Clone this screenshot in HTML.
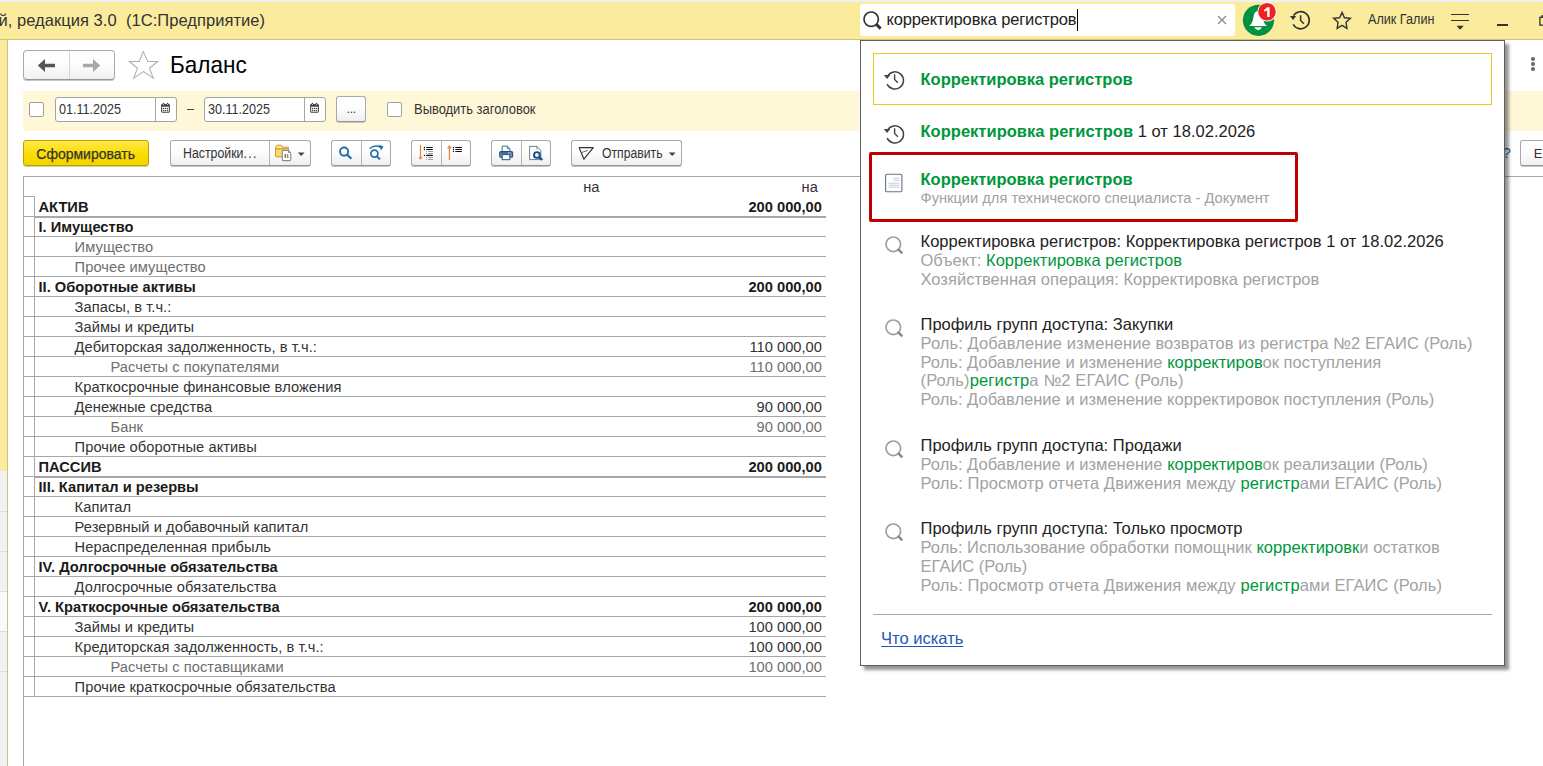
<!DOCTYPE html>
<html><head><meta charset="utf-8"><style>
html,body{margin:0;padding:0;width:1543px;height:766px;overflow:hidden;background:#fff;}
body{position:relative;font-family:"Liberation Sans", sans-serif;}
body>div,body>svg{position:absolute;}
.t{white-space:nowrap;line-height:1;}
</style></head><body>
<div style="left:0px;top:0px;width:1543px;height:2px;background:#F0F0F0"></div>
<div style="left:0px;top:2px;width:1543px;height:37px;background:#FBEB9D"></div>
<div style="left:0px;top:39px;width:1543px;height:1px;background:#D3C37A"></div>
<div style="left:0px;top:40px;width:7px;height:431px;background:#FBEB9D"></div>
<div style="left:0px;top:471px;width:7px;height:295px;background:#F2F2F2"></div>
<div style="left:0px;top:511px;width:7px;height:1px;background:#DCDCDC"></div>
<div style="left:0px;top:551px;width:7px;height:1px;background:#DCDCDC"></div>
<div style="left:0px;top:591px;width:7px;height:1px;background:#DCDCDC"></div>
<div style="left:0px;top:631px;width:7px;height:1px;background:#DCDCDC"></div>
<div style="left:0px;top:671px;width:7px;height:1px;background:#DCDCDC"></div>
<div style="left:0px;top:592px;width:7px;height:39px;background:#FAFAFA"></div>
<div style="left:7px;top:40px;width:1px;height:726px;background:#CFC07A"></div>
<div class="t" style="left:-1.6px;top:12.03px;font-size:16.5px;font-weight:400;color:#333;letter-spacing:0.05px;">й, редакция 3.0&nbsp; (1С:Предприятие)</div>
<div style="left:860px;top:4px;width:375px;height:32px;background:#fff;border-radius:3px"></div>
<svg style="left:860px;top:8px" width="26" height="26" viewBox="0 0 26 26"><circle cx="11.2" cy="11.2" r="7.2" fill="none" stroke="#333" stroke-width="1.7"/><line x1="16.3" y1="16.3" x2="20.6" y2="20.6" stroke="#333" stroke-width="3" stroke-linecap="butt"/></svg>
<div class="t" style="left:886.5px;top:11.03px;font-size:16.5px;font-weight:400;color:#222;letter-spacing:-0.15px;">корректировка регистров</div>
<div style="left:1077px;top:9px;width:1px;height:22px;background:#000"></div>
<svg style="left:1214px;top:12px" width="16" height="16" viewBox="0 0 16 16"><path d="M4 4 L12 12 M12 4 L4 12" stroke="#8a8a8a" stroke-width="1.3"/></svg>
<svg style="left:1240px;top:0px" width="42" height="40" viewBox="0 0 42 40"><circle cx="18.5" cy="20.3" r="15.6" fill="#009240"/><path d="M18 11.3 Q14.6 11.3 13.8 15.5 L12.6 21 Q11.6 24 9.2 25.9 L26.8 25.9 Q24.4 24 23.4 21 L22.2 15.5 Q21.4 11.3 18 11.3 Z" fill="#fff"/><path d="M14.3 27.3 L22 27.3 Q20.5 30.2 18.2 30.2 Q15.8 30.2 14.3 27.3 Z" fill="#fff"/><circle cx="27" cy="11.8" r="9.7" fill="#fff"/><circle cx="27" cy="11.8" r="8.8" fill="#EE2222"/><path d="M27 7.2 L29.6 7.2 L29.6 17 L27.2 17 L27.2 10.3 Q25.8 11.3 24.2 11.7 L24.2 9.6 Q26 9 27 7.2 Z" fill="#fff"/></svg>
<svg style="left:1288px;top:8px" width="26" height="26" viewBox="0 0 26 26"><path d="M5.15 16.4 A8.6 8.6 0 1 0 5.4 7.6" fill="none" stroke="#333" stroke-width="1.6"/><path d="M1.9 8 L8.1 8 L5.1 12 Z" fill="#333"/><path d="M12.6 7.2 L12.6 12.4 L15.9 15.8" fill="none" stroke="#333" stroke-width="1.5"/></svg>
<svg style="left:1330px;top:9px" width="24" height="24" viewBox="0 0 24 24"><path transform="translate(12.1 12) scale(0.88) translate(-12.1 -12)" d="M12.1 2.3 L14.8 8.3 L21.5 8.9 L16.6 13.5 L17.6 20.4 L12.1 16.9 L6.5 20.4 L7.5 13.5 L2.5 8.9 L9.2 8.3 Z" fill="none" stroke="#333" stroke-width="1.6" stroke-linejoin="miter"/></svg>
<div class="t" style="left:1368px;top:13.32px;font-size:13.8px;font-weight:400;color:#333;transform:scaleX(0.915);transform-origin:0 0;">Алик Галин</div>
<div style="left:1451px;top:14px;width:18px;height:1.3px;background:#333"></div>
<div style="left:1451px;top:20px;width:18px;height:1.3px;background:#333"></div>
<svg style="left:1455px;top:25px" width="10" height="6" viewBox="0 0 10 6"><path d="M1.5 0.8 L8.7 0.8 L5.1 4.7 Z" fill="#333"/></svg>
<div style="left:1497px;top:24.3px;width:11px;height:1.5px;background:#333"></div>
<svg style="left:1536px;top:12px" width="10" height="16" viewBox="0 0 10 16"><rect x="3.9" y="5.3" width="10" height="7.8" fill="none" stroke="#222" stroke-width="1.2"/><path d="M6 5.3 L6 3.8 L14 3.8" fill="none" stroke="#222" stroke-width="1.2"/></svg>
<div style="left:23px;top:50px;width:92px;height:30px;background:linear-gradient(#ffffff 0%,#fdfdfd 45%,#f0f0f0 100%);border:1px solid #A9A9A9;border-bottom-color:#959595;box-shadow:0 1px 0 #c4c4c4;border-radius:3px;box-sizing:border-box;border-radius:4px"></div>
<div style="left:69px;top:51px;width:1px;height:28px;background:#D6D6D6"></div>
<svg style="left:36px;top:57px" width="22" height="18" viewBox="0 0 22 18"><path d="M1.8 8.5 L9 2 L9 6.8 L19 6.8 L19 10.2 L9 10.2 L9 15 Z" fill="#555"/></svg>
<svg style="left:81px;top:57px" width="22" height="18" viewBox="0 0 22 18"><path d="M19.2 8.5 L12 2 L12 6.8 L2 6.8 L2 10.2 L12 10.2 L12 15 Z" fill="#A8A8A8"/></svg>
<svg style="left:124px;top:46px" width="40" height="38" viewBox="0 0 40 38"><path transform="translate(19.4 19.8) scale(0.975) translate(-19.4 -19.8)" d="M19.4 5.3 L23.8 15.4 L34 15.4 L25.6 22.3 L29.5 32.5 L19.4 25.8 L9.4 32.5 L13.4 22.3 L5 15.4 L15.1 15.4 Z" fill="none" stroke="#A8B1BB" stroke-width="1.05" stroke-linejoin="miter"/></svg>
<div class="t" style="left:170.2px;top:53.15px;font-size:24.4px;font-weight:400;color:#000;transform:scaleX(0.925);transform-origin:0 0">Баланс</div>
<div style="left:1530.5px;top:57px;width:4.4px;height:4.4px;border-radius:50%;background:#666"></div>
<div style="left:1530.5px;top:62px;width:4.4px;height:4.4px;border-radius:50%;background:#666"></div>
<div style="left:1530.5px;top:67px;width:4.4px;height:4.4px;border-radius:50%;background:#666"></div>
<div style="left:23px;top:91px;width:1520px;height:40px;background:#FFF8D8"></div>
<div style="left:29px;top:102px;width:15px;height:15px;background:#fff;border:1px solid #A0A0A0;border-radius:2px;box-sizing:border-box"></div>
<div style="left:55px;top:97px;width:122px;height:25px;background:#fff;border:1px solid #A3A3A3;border-radius:3px;box-sizing:border-box"></div>
<div style="left:155px;top:98px;width:1px;height:23px;background:#A8A8A8"></div>
<div class="t" style="left:59.4px;top:102.05px;font-size:14px;font-weight:400;color:#333;transform:scaleX(0.9);transform-origin:0 0;">01.11.2025</div>
<svg style="left:158px;top:100px" width="16" height="16" viewBox="0 0 16 16"><rect x="3.1" y="4" width="8.8" height="8.7" rx="1.1" fill="#444"/><rect x="4.1" y="6.7" width="6.8" height="5" fill="#fff"/><rect x="4.7" y="2.8" width="1.6" height="2.6" rx="0.8" fill="#444"/><rect x="8.7" y="2.8" width="1.6" height="2.6" rx="0.8" fill="#444"/><rect x="5.1" y="4.1" width="0.8" height="0.9" fill="#fff"/><rect x="9.1" y="4.1" width="0.8" height="0.9" fill="#fff"/><g fill="#444"><circle cx="5.5" cy="8.5" r="0.75"/><circle cx="7.5" cy="8.5" r="0.75"/><circle cx="9.5" cy="8.5" r="0.75"/><circle cx="5.5" cy="10.4" r="0.75"/><circle cx="7.5" cy="10.4" r="0.75"/><circle cx="9.5" cy="10.4" r="0.75"/></g></svg>
<div style="left:204px;top:97px;width:122px;height:25px;background:#fff;border:1px solid #A3A3A3;border-radius:3px;box-sizing:border-box"></div>
<div style="left:304px;top:98px;width:1px;height:23px;background:#A8A8A8"></div>
<div class="t" style="left:208.4px;top:102.05px;font-size:14px;font-weight:400;color:#333;transform:scaleX(0.9);transform-origin:0 0;">30.11.2025</div>
<svg style="left:307px;top:100px" width="16" height="16" viewBox="0 0 16 16"><rect x="3.1" y="4" width="8.8" height="8.7" rx="1.1" fill="#444"/><rect x="4.1" y="6.7" width="6.8" height="5" fill="#fff"/><rect x="4.7" y="2.8" width="1.6" height="2.6" rx="0.8" fill="#444"/><rect x="8.7" y="2.8" width="1.6" height="2.6" rx="0.8" fill="#444"/><rect x="5.1" y="4.1" width="0.8" height="0.9" fill="#fff"/><rect x="9.1" y="4.1" width="0.8" height="0.9" fill="#fff"/><g fill="#444"><circle cx="5.5" cy="8.5" r="0.75"/><circle cx="7.5" cy="8.5" r="0.75"/><circle cx="9.5" cy="8.5" r="0.75"/><circle cx="5.5" cy="10.4" r="0.75"/><circle cx="7.5" cy="10.4" r="0.75"/><circle cx="9.5" cy="10.4" r="0.75"/></g></svg>
<div style="left:187px;top:109px;width:7px;height:1.2px;background:#444"></div>
<div style="left:336px;top:96px;width:30px;height:26px;background:linear-gradient(#ffffff 0%,#fdfdfd 45%,#f0f0f0 100%);border:1px solid #A9A9A9;border-bottom-color:#959595;box-shadow:0 1px 0 #c4c4c4;border-radius:3px;box-sizing:border-box"></div>
<div class="t" style="left:346.6px;top:103.14px;font-size:12px;font-weight:400;color:#333;letter-spacing:-0.25px;">...</div>
<div style="left:387px;top:102px;width:15px;height:15px;background:#fff;border:1px solid #A0A0A0;border-radius:2px;box-sizing:border-box"></div>
<div class="t" style="left:413.6px;top:101.95px;font-size:14px;font-weight:400;color:#333;transform:scaleX(0.924);transform-origin:0 0;">Выводить заголовок</div>
<div style="left:23px;top:140px;width:126px;height:26px;background:linear-gradient(#FFE84A,#FBDD00 55%,#F2D400);border:1px solid #B9A200;border-radius:3px;box-sizing:border-box;box-shadow:0 1px 0 #d8cfa0"></div>
<div class="t" style="left:36.3px;top:146.65px;font-size:14px;font-weight:400;color:#333;-webkit-text-stroke:0.25px #333">Сформировать</div>
<div style="left:170px;top:140px;width:141px;height:26px;background:linear-gradient(#ffffff 0%,#fdfdfd 45%,#f0f0f0 100%);border:1px solid #A9A9A9;border-bottom-color:#959595;box-shadow:0 1px 0 #c4c4c4;border-radius:3px;box-sizing:border-box"></div>
<div style="left:269px;top:141px;width:1px;height:24px;background:#B5B5B5"></div>
<div class="t" style="left:182.6px;top:146.45px;font-size:14px;font-weight:400;color:#333;transform:scaleX(0.88);transform-origin:0 0;">Настройки<span style="letter-spacing:1.5px">...</span></div>
<svg style="left:272px;top:142px" width="22" height="22" viewBox="0 0 22 22"><rect x="3.6" y="6.6" width="13" height="8.2" rx="0.8" fill="#F7DB6C" stroke="#C68A2C" stroke-width="0.9"/><path d="M3.6 6.8 L3.6 5 Q4.6 3.1 6 3.1 L8.9 3.1 Q10 3.1 10.8 5.2 L16 5.2 Q16.6 5.2 16.6 5.9 L16.6 6.8 Z" fill="#FBE87E" stroke="#C68A2C" stroke-width="0.9"/><path d="M11.2 8.5 L16.3 8.5 L18.7 10.9 L18.7 17.7 Q18.7 18.6 17.8 18.6 L11.2 18.6 Q10.3 18.6 10.3 17.7 L10.3 9.4 Q10.3 8.5 11.2 8.5 Z" fill="#fff" stroke="#7D8C9B" stroke-width="1.1"/><path d="M16.2 8.6 L18.6 11 L16.2 11 Z" fill="#7D8C9B"/><rect x="12.7" y="12.1" width="1.3" height="3.2" fill="#E83030"/><rect x="15" y="12.1" width="1.3" height="3.2" fill="#3CB04A"/><rect x="12.2" y="15.4" width="4.8" height="0.6" fill="#9A8AA0"/></svg>
<svg style="left:297px;top:151px" width="9" height="6" viewBox="0 0 9 6"><path d="M0.8 1.5 L7.6 1.5 L4.2 5 Z" fill="#444"/></svg>
<div style="left:331px;top:140px;width:60px;height:26px;background:linear-gradient(#ffffff 0%,#fdfdfd 45%,#f0f0f0 100%);border:1px solid #A9A9A9;border-bottom-color:#959595;box-shadow:0 1px 0 #c4c4c4;border-radius:3px;box-sizing:border-box"></div>
<div style="left:361px;top:141px;width:1px;height:24px;background:#B5B5B5"></div>
<svg style="left:336px;top:143px" width="20" height="20" viewBox="0 0 20 20"><circle cx="8.1" cy="8.6" r="4.1" fill="none" stroke="#2470A8" stroke-width="1.9"/><line x1="11" y1="11.6" x2="15.4" y2="15.8" stroke="#2470A8" stroke-width="2.2"/></svg>
<svg style="left:366px;top:143px" width="20" height="20" viewBox="0 0 20 20"><circle cx="8.4" cy="10.6" r="3.5" fill="none" stroke="#2470A8" stroke-width="1.8"/><line x1="10.8" y1="13.2" x2="14" y2="16.4" stroke="#2470A8" stroke-width="2"/><path d="M3.7 5.5 Q9 1.2 14.5 4.3" fill="none" stroke="#2470A8" stroke-width="1.6"/><path d="M13 1.8 L17.6 3.6 L15 7.6 Z" fill="#2470A8"/></svg>
<div style="left:411px;top:140px;width:60px;height:26px;background:linear-gradient(#ffffff 0%,#fdfdfd 45%,#f0f0f0 100%);border:1px solid #A9A9A9;border-bottom-color:#959595;box-shadow:0 1px 0 #c4c4c4;border-radius:3px;box-sizing:border-box"></div>
<div style="left:441px;top:141px;width:1px;height:24px;background:#B5B5B5"></div>
<svg style="left:415px;top:143px" width="24" height="20" viewBox="0 0 24 20"><line x1="5.5" y1="2" x2="5.5" y2="14.5" stroke="#F08040" stroke-width="1.2"/><path d="M3.3 14 L7.7 14 L5.5 16.8 Z" fill="#F08040"/><circle cx="9.4" cy="4.5" r="0.7" fill="#111"/><rect x="11.1" y="3.9" width="6.8" height="1.2" rx="0.5" fill="#111"/><circle cx="9.4" cy="6.5" r="0.7" fill="#111"/><rect x="11.1" y="5.9" width="6.8" height="1.2" rx="0.5" fill="#111"/><circle cx="11.5" cy="8.5" r="0.55" fill="#999"/><rect x="13.2" y="8.0" width="4.7" height="1" fill="#9a9a9a"/><circle cx="11.5" cy="10.5" r="0.55" fill="#999"/><rect x="13.2" y="10.0" width="4.7" height="1" fill="#9a9a9a"/><circle cx="9.4" cy="12.4" r="0.7" fill="#111"/><rect x="11.1" y="11.8" width="6.8" height="1.2" rx="0.5" fill="#111"/><circle cx="11.5" cy="14.5" r="0.55" fill="#999"/><rect x="13.2" y="14.0" width="4.7" height="1" fill="#9a9a9a"/><circle cx="11.5" cy="16.5" r="0.55" fill="#999"/><rect x="13.2" y="16.0" width="4.7" height="1" fill="#9a9a9a"/></svg>
<svg style="left:444px;top:143px" width="24" height="20" viewBox="0 0 24 20"><line x1="5.4" y1="4.5" x2="5.4" y2="17" stroke="#F08040" stroke-width="1.2"/><path d="M3 5.3 L7.8 5.3 L5.4 2 Z" fill="#F08040"/><g transform="translate(0.1 0)"><circle cx="9.4" cy="4.5" r="0.7" fill="#111"/><rect x="11.1" y="3.9" width="6.8" height="1.2" rx="0.5" fill="#111"/><circle cx="9.4" cy="6.5" r="0.7" fill="#111"/><rect x="11.1" y="5.9" width="6.8" height="1.2" rx="0.5" fill="#111"/><circle cx="9.4" cy="8.5" r="0.7" fill="#111"/><rect x="11.1" y="7.9" width="6.8" height="1.2" rx="0.5" fill="#111"/></g></svg>
<div style="left:491px;top:140px;width:60px;height:26px;background:linear-gradient(#ffffff 0%,#fdfdfd 45%,#f0f0f0 100%);border:1px solid #A9A9A9;border-bottom-color:#959595;box-shadow:0 1px 0 #c4c4c4;border-radius:3px;box-sizing:border-box"></div>
<div style="left:521px;top:141px;width:1px;height:24px;background:#B5B5B5"></div>
<svg style="left:497px;top:144px" width="18" height="18" viewBox="0 0 18 18"><path d="M5.2 2.2 L10.3 2.2 L12.8 4.7 L12.8 8 L5.2 8 Z" fill="#fff" stroke="#3A6690" stroke-width="0.95"/><path d="M10.3 2.2 L10.3 4.7 L12.8 4.7" fill="none" stroke="#3A6690" stroke-width="0.8"/><rect x="2.7" y="7.6" width="13" height="5.7" rx="1.3" fill="#6A93BD" stroke="#24527E" stroke-width="1.1"/><rect x="3.4" y="8.6" width="11.6" height="0.9" fill="#24527E"/><circle cx="11.6" cy="8.9" r="0.55" fill="#fff"/><circle cx="13.3" cy="8.9" r="0.55" fill="#fff"/><rect x="5.2" y="10.6" width="7.6" height="5.1" fill="#fff" stroke="#24527E" stroke-width="0.95"/></svg>
<svg style="left:527px;top:144px" width="18" height="18" viewBox="0 0 18 18"><path d="M2.6 2.4 L9.9 2.4 L13.8 6.5 L13.8 15.6 L2.6 15.6 Z" fill="#fff" stroke="#5C6F86" stroke-width="0.9" stroke-linejoin="round"/><path d="M9.9 2.4 L9.9 5.5" stroke="#5C6F86" stroke-width="0.8"/><circle cx="9.9" cy="11" r="2.9" fill="#F6F3EA" stroke="#0E4D85" stroke-width="1.9"/><line x1="12.1" y1="13.2" x2="15.2" y2="16" stroke="#0E4D85" stroke-width="2.3"/></svg>
<div style="left:571px;top:140px;width:111px;height:26px;background:linear-gradient(#ffffff 0%,#fdfdfd 45%,#f0f0f0 100%);border:1px solid #A9A9A9;border-bottom-color:#959595;box-shadow:0 1px 0 #c4c4c4;border-radius:3px;box-sizing:border-box"></div>
<svg style="left:576px;top:145px" width="20" height="17" viewBox="0 0 20 17"><path d="M3.2 2.6 L17.3 2.6 L7.9 14.2 L5.3 7.7 Q4.3 5.8 3.2 2.6 Z" fill="none" stroke="#333" stroke-width="1.15" stroke-linejoin="round"/><path d="M5.3 7.7 L11.8 5.3" stroke="#555" stroke-width="0.9"/></svg>
<div class="t" style="left:601.8px;top:146.62px;font-size:13.8px;font-weight:400;color:#333;transform:scaleX(0.885);transform-origin:0 0;">Отправить</div>
<svg style="left:668px;top:151px" width="9" height="6" viewBox="0 0 9 6"><path d="M0.8 1.5 L7.6 1.5 L4.2 5 Z" fill="#444"/></svg>
<div class="t" style="left:1502.5px;top:145.10px;font-size:15px;font-weight:400;color:#2468B0;">?</div>
<div style="left:1520px;top:140px;width:40px;height:26px;background:linear-gradient(#ffffff 0%,#fdfdfd 45%,#f0f0f0 100%);border:1px solid #A9A9A9;border-bottom-color:#959595;box-shadow:0 1px 0 #c4c4c4;border-radius:3px;box-sizing:border-box"></div>
<div class="t" style="left:1533.8px;top:147.00px;font-size:13px;font-weight:400;color:#333;">Е</div>
<div style="left:23px;top:176px;width:1520px;height:1px;background:#A7A7A7"></div>
<div style="left:23px;top:176px;width:1px;height:590px;background:#A7A7A7"></div>
<div style="left:34px;top:196px;width:1px;height:500px;background:#A7A7A7"></div>
<div class="t" style="left:583.2px;top:179.58px;font-size:14.67px;font-weight:400;color:#333;">на</div>
<div class="t" style="right:725.2px;top:179.58px;font-size:14.67px;font-weight:400;color:#333;">на</div>
<div style="left:23px;top:196px;width:11px;height:1px;background:#A7A7A7"></div>
<div style="left:34px;top:216px;width:792px;height:2px;background:#A7A7A7"></div>
<div style="left:23px;top:216px;width:11px;height:1px;background:#A7A7A7"></div>
<div class="t" style="left:38.5px;top:199.68px;font-size:14.67px;font-weight:700;color:#1a1a1a;">АКТИВ</div>
<div class="t" style="right:721.2px;top:199.68px;font-size:14.67px;font-weight:700;color:#1a1a1a;">200 000,00</div>
<div style="left:23px;top:216px;width:11px;height:1px;background:#A7A7A7"></div>
<div style="left:23px;top:236px;width:803px;height:1px;background:#A7A7A7"></div>
<div class="t" style="left:38.5px;top:219.68px;font-size:14.67px;font-weight:700;color:#1a1a1a;">I. Имущество</div>
<div style="left:23px;top:236px;width:11px;height:1px;background:#A7A7A7"></div>
<div style="left:23px;top:256px;width:803px;height:1px;background:#A7A7A7"></div>
<div class="t" style="left:74.6px;top:239.68px;font-size:14.67px;font-weight:400;color:#6E6E6E;letter-spacing:0.06px;">Имущество</div>
<div style="left:23px;top:256px;width:11px;height:1px;background:#A7A7A7"></div>
<div style="left:23px;top:276px;width:803px;height:1px;background:#A7A7A7"></div>
<div class="t" style="left:74.6px;top:259.68px;font-size:14.67px;font-weight:400;color:#6E6E6E;letter-spacing:0.06px;">Прочее имущество</div>
<div style="left:23px;top:276px;width:11px;height:1px;background:#A7A7A7"></div>
<div style="left:23px;top:296px;width:803px;height:1px;background:#A7A7A7"></div>
<div class="t" style="left:38.5px;top:279.68px;font-size:14.67px;font-weight:700;color:#1a1a1a;">II. Оборотные активы</div>
<div class="t" style="right:721.2px;top:279.68px;font-size:14.67px;font-weight:700;color:#1a1a1a;">200 000,00</div>
<div style="left:23px;top:296px;width:11px;height:1px;background:#A7A7A7"></div>
<div style="left:23px;top:316px;width:803px;height:1px;background:#A7A7A7"></div>
<div class="t" style="left:74.6px;top:299.68px;font-size:14.67px;font-weight:400;color:#333;letter-spacing:0.06px;">Запасы, в т.ч.:</div>
<div style="left:23px;top:316px;width:11px;height:1px;background:#A7A7A7"></div>
<div style="left:23px;top:336px;width:803px;height:1px;background:#A7A7A7"></div>
<div class="t" style="left:74.6px;top:319.68px;font-size:14.67px;font-weight:400;color:#333;letter-spacing:0.06px;">Займы и кредиты</div>
<div style="left:23px;top:336px;width:11px;height:1px;background:#A7A7A7"></div>
<div style="left:23px;top:356px;width:803px;height:1px;background:#A7A7A7"></div>
<div class="t" style="left:74.6px;top:339.68px;font-size:14.67px;font-weight:400;color:#333;letter-spacing:0.06px;">Дебиторская задолженность, в т.ч.:</div>
<div class="t" style="right:721.2px;top:339.68px;font-size:14.67px;font-weight:400;color:#333;">110 000,00</div>
<div style="left:23px;top:356px;width:11px;height:1px;background:#A7A7A7"></div>
<div style="left:23px;top:376px;width:803px;height:1px;background:#A7A7A7"></div>
<div class="t" style="left:110.5px;top:359.68px;font-size:14.67px;font-weight:400;color:#6E6E6E;letter-spacing:0.06px;">Расчеты с покупателями</div>
<div class="t" style="right:721.2px;top:359.68px;font-size:14.67px;font-weight:400;color:#6E6E6E;">110 000,00</div>
<div style="left:23px;top:376px;width:11px;height:1px;background:#A7A7A7"></div>
<div style="left:23px;top:396px;width:803px;height:1px;background:#A7A7A7"></div>
<div class="t" style="left:74.6px;top:379.68px;font-size:14.67px;font-weight:400;color:#333;letter-spacing:0.06px;">Краткосрочные финансовые вложения</div>
<div style="left:23px;top:396px;width:11px;height:1px;background:#A7A7A7"></div>
<div style="left:23px;top:416px;width:803px;height:1px;background:#A7A7A7"></div>
<div class="t" style="left:74.6px;top:399.68px;font-size:14.67px;font-weight:400;color:#333;letter-spacing:0.06px;">Денежные средства</div>
<div class="t" style="right:721.2px;top:399.68px;font-size:14.67px;font-weight:400;color:#333;">90 000,00</div>
<div style="left:23px;top:416px;width:11px;height:1px;background:#A7A7A7"></div>
<div style="left:23px;top:436px;width:803px;height:1px;background:#A7A7A7"></div>
<div class="t" style="left:110.5px;top:419.68px;font-size:14.67px;font-weight:400;color:#6E6E6E;letter-spacing:0.06px;">Банк</div>
<div class="t" style="right:721.2px;top:419.68px;font-size:14.67px;font-weight:400;color:#6E6E6E;">90 000,00</div>
<div style="left:23px;top:436px;width:11px;height:1px;background:#A7A7A7"></div>
<div style="left:23px;top:456px;width:803px;height:1px;background:#A7A7A7"></div>
<div class="t" style="left:74.6px;top:439.68px;font-size:14.67px;font-weight:400;color:#333;letter-spacing:0.06px;">Прочие оборотные активы</div>
<div style="left:23px;top:456px;width:11px;height:1px;background:#A7A7A7"></div>
<div style="left:34px;top:476px;width:792px;height:2px;background:#A7A7A7"></div>
<div style="left:23px;top:476px;width:11px;height:1px;background:#A7A7A7"></div>
<div class="t" style="left:38.5px;top:459.68px;font-size:14.67px;font-weight:700;color:#1a1a1a;">ПАССИВ</div>
<div class="t" style="right:721.2px;top:459.68px;font-size:14.67px;font-weight:700;color:#1a1a1a;">200 000,00</div>
<div style="left:23px;top:476px;width:11px;height:1px;background:#A7A7A7"></div>
<div style="left:23px;top:496px;width:803px;height:1px;background:#A7A7A7"></div>
<div class="t" style="left:38.5px;top:479.68px;font-size:14.67px;font-weight:700;color:#1a1a1a;">III. Капитал и резервы</div>
<div style="left:23px;top:496px;width:11px;height:1px;background:#A7A7A7"></div>
<div style="left:23px;top:516px;width:803px;height:1px;background:#A7A7A7"></div>
<div class="t" style="left:74.6px;top:499.68px;font-size:14.67px;font-weight:400;color:#333;letter-spacing:0.06px;">Капитал</div>
<div style="left:23px;top:516px;width:11px;height:1px;background:#A7A7A7"></div>
<div style="left:23px;top:536px;width:803px;height:1px;background:#A7A7A7"></div>
<div class="t" style="left:74.6px;top:519.68px;font-size:14.67px;font-weight:400;color:#333;letter-spacing:0.06px;">Резервный и добавочный капитал</div>
<div style="left:23px;top:536px;width:11px;height:1px;background:#A7A7A7"></div>
<div style="left:23px;top:556px;width:803px;height:1px;background:#A7A7A7"></div>
<div class="t" style="left:74.6px;top:539.68px;font-size:14.67px;font-weight:400;color:#333;letter-spacing:0.06px;">Нераспределенная прибыль</div>
<div style="left:23px;top:556px;width:11px;height:1px;background:#A7A7A7"></div>
<div style="left:23px;top:576px;width:803px;height:1px;background:#A7A7A7"></div>
<div class="t" style="left:38.5px;top:559.68px;font-size:14.67px;font-weight:700;color:#1a1a1a;">IV. Долгосрочные обязательства</div>
<div style="left:23px;top:576px;width:11px;height:1px;background:#A7A7A7"></div>
<div style="left:23px;top:596px;width:803px;height:1px;background:#A7A7A7"></div>
<div class="t" style="left:74.6px;top:579.68px;font-size:14.67px;font-weight:400;color:#333;letter-spacing:0.06px;">Долгосрочные обязательства</div>
<div style="left:23px;top:596px;width:11px;height:1px;background:#A7A7A7"></div>
<div style="left:23px;top:616px;width:803px;height:1px;background:#A7A7A7"></div>
<div class="t" style="left:38.5px;top:599.68px;font-size:14.67px;font-weight:700;color:#1a1a1a;">V. Краткосрочные обязательства</div>
<div class="t" style="right:721.2px;top:599.68px;font-size:14.67px;font-weight:700;color:#1a1a1a;">200 000,00</div>
<div style="left:23px;top:616px;width:11px;height:1px;background:#A7A7A7"></div>
<div style="left:23px;top:636px;width:803px;height:1px;background:#A7A7A7"></div>
<div class="t" style="left:74.6px;top:619.68px;font-size:14.67px;font-weight:400;color:#333;letter-spacing:0.06px;">Займы и кредиты</div>
<div class="t" style="right:721.2px;top:619.68px;font-size:14.67px;font-weight:400;color:#333;">100 000,00</div>
<div style="left:23px;top:636px;width:11px;height:1px;background:#A7A7A7"></div>
<div style="left:23px;top:656px;width:803px;height:1px;background:#A7A7A7"></div>
<div class="t" style="left:74.6px;top:639.68px;font-size:14.67px;font-weight:400;color:#333;letter-spacing:0.06px;">Кредиторская задолженность, в т.ч.:</div>
<div class="t" style="right:721.2px;top:639.68px;font-size:14.67px;font-weight:400;color:#333;">100 000,00</div>
<div style="left:23px;top:656px;width:11px;height:1px;background:#A7A7A7"></div>
<div style="left:23px;top:676px;width:803px;height:1px;background:#A7A7A7"></div>
<div class="t" style="left:110.5px;top:659.68px;font-size:14.67px;font-weight:400;color:#6E6E6E;letter-spacing:0.06px;">Расчеты с поставщиками</div>
<div class="t" style="right:721.2px;top:659.68px;font-size:14.67px;font-weight:400;color:#6E6E6E;">100 000,00</div>
<div style="left:23px;top:676px;width:11px;height:1px;background:#A7A7A7"></div>
<div style="left:23px;top:696px;width:803px;height:1px;background:#A7A7A7"></div>
<div class="t" style="left:74.6px;top:679.68px;font-size:14.67px;font-weight:400;color:#333;letter-spacing:0.06px;">Прочие краткосрочные обязательства</div>
<div style="left:860px;top:40px;width:645px;height:626px;background:#fff;border:1px solid #5E5E5E;box-sizing:border-box;box-shadow:4px 4px 3px rgba(0,0,0,0.42)"></div>
<div style="left:873px;top:53px;width:619px;height:52px;border:1px solid #F4C420;box-sizing:border-box"></div>
<svg style="left:882px;top:68px" width="24" height="24" viewBox="0 0 24 24"><path d="M5.1 16.1 A8.6 8.6 0 1 0 5.6 7.9" fill="none" stroke="#444" stroke-width="1.5"/><path d="M1.8 7 L8.3 7 L5.1 10.9 Z" fill="#444"/><path d="M12.6 6.2 L12.6 11.5 L15.9 14.8" fill="none" stroke="#444" stroke-width="1.4"/></svg>
<div class="t" style="left:920.5px;top:71.03px;font-size:16.5px;font-weight:700;color:#00963C;">Корректировка регистров</div>
<svg style="left:882px;top:122px" width="24" height="24" viewBox="0 0 24 24"><path d="M5.1 16.1 A8.6 8.6 0 1 0 5.6 7.9" fill="none" stroke="#444" stroke-width="1.5"/><path d="M1.8 7 L8.3 7 L5.1 10.9 Z" fill="#444"/><path d="M12.6 6.2 L12.6 11.5 L15.9 14.8" fill="none" stroke="#444" stroke-width="1.4"/></svg>
<div class="t" style="left:920.5px;top:123.03px;font-size:16.5px;font-weight:400;color:#222;letter-spacing:0.02px;"><b style="color:#00963C">Корректировка регистров</b> 1 от 18.02.2026</div>
<div style="left:869px;top:152px;width:429px;height:70px;border:3px solid #C00000;border-radius:2px;box-sizing:border-box"></div>
<svg style="left:884px;top:173px" width="20" height="20" viewBox="0 0 20 20"><rect x="1.6" y="1.3" width="16.3" height="17.5" rx="1.3" fill="#fff" stroke="#6B7180" stroke-width="1.1"/><g fill="#C3CDD9"><rect x="9.5" y="4.8" width="5.8" height="1"/><rect x="9.5" y="6.8" width="5.8" height="1"/><rect x="4.5" y="9.7" width="10.8" height="1"/><rect x="4.5" y="11.7" width="10.8" height="1"/><rect x="4.5" y="13.7" width="10.8" height="1"/></g></svg>
<div class="t" style="left:920.5px;top:171.03px;font-size:16.5px;font-weight:700;color:#00963C;">Корректировка регистров</div>
<div class="t" style="left:920.5px;top:190.58px;font-size:14.67px;font-weight:400;color:#A2A2A2;">Функции для технического специалиста - Документ</div>
<svg style="left:884px;top:235px" width="22" height="22" viewBox="0 0 22 22"><circle cx="9.3" cy="9.3" r="7.3" fill="none" stroke="#9E9E9E" stroke-width="1.7"/><line x1="14.6" y1="14.6" x2="17.6" y2="17.6" stroke="#8A8A8A" stroke-width="2.6" stroke-linecap="round"/></svg>
<div class="t" style="left:920.5px;top:233.03px;font-size:16.5px;font-weight:400;color:#222;letter-spacing:0.02px;">Корректировка регистров: Корректировка регистров 1 от 18.02.2026</div>
<div class="t" style="left:920.5px;top:251.53px;font-size:16.5px;font-weight:400;color:#A2A2A2;letter-spacing:0.02px;">Объект: <span style="color:#00963C">Корректировка регистров</span></div>
<div class="t" style="left:920.5px;top:270.53px;font-size:16.5px;font-weight:400;color:#A2A2A2;letter-spacing:0.02px;">Хозяйственная операция: Корректировка регистров</div>
<svg style="left:884px;top:318px" width="22" height="22" viewBox="0 0 22 22"><circle cx="9.3" cy="9.3" r="7.3" fill="none" stroke="#9E9E9E" stroke-width="1.7"/><line x1="14.6" y1="14.6" x2="17.6" y2="17.6" stroke="#8A8A8A" stroke-width="2.6" stroke-linecap="round"/></svg>
<div class="t" style="left:920.5px;top:315.83px;font-size:16.5px;font-weight:400;color:#222;letter-spacing:0.02px;">Профиль групп доступа: Закупки</div>
<div class="t" style="left:920.5px;top:334.83px;font-size:16.5px;font-weight:400;color:#A2A2A2;letter-spacing:0.1px;">Роль: Добавление изменение возвратов из регистра №2 ЕГАИС (Роль)</div>
<div class="t" style="left:920.5px;top:353.53px;font-size:16.5px;font-weight:400;color:#A2A2A2;letter-spacing:0.02px;">Роль: Добавление и изменение <span style="color:#00963C">корректиров</span>ок поступления</div>
<div class="t" style="left:920.5px;top:372.23px;font-size:16.5px;font-weight:400;color:#A2A2A2;letter-spacing:0.15px;">(Роль)<span style="color:#00963C">регистр</span>а №2 ЕГАИС (Роль)</div>
<div class="t" style="left:920.5px;top:391.03px;font-size:16.5px;font-weight:400;color:#A2A2A2;letter-spacing:0.02px;">Роль: Добавление и изменение корректировок поступления (Роль)</div>
<svg style="left:884px;top:439px" width="22" height="22" viewBox="0 0 22 22"><circle cx="9.3" cy="9.3" r="7.3" fill="none" stroke="#9E9E9E" stroke-width="1.7"/><line x1="14.6" y1="14.6" x2="17.6" y2="17.6" stroke="#8A8A8A" stroke-width="2.6" stroke-linecap="round"/></svg>
<div class="t" style="left:920.5px;top:437.03px;font-size:16.5px;font-weight:400;color:#222;letter-spacing:0.02px;">Профиль групп доступа: Продажи</div>
<div class="t" style="left:920.5px;top:455.83px;font-size:16.5px;font-weight:400;color:#A2A2A2;letter-spacing:0.02px;">Роль: Добавление и изменение <span style="color:#00963C">корректиров</span>ок реализации (Роль)</div>
<div class="t" style="left:920.5px;top:474.63px;font-size:16.5px;font-weight:400;color:#A2A2A2;letter-spacing:0.1px;">Роль: Просмотр отчета Движения между <span style="color:#00963C">регистр</span>ами ЕГАИС (Роль)</div>
<svg style="left:884px;top:522px" width="22" height="22" viewBox="0 0 22 22"><circle cx="9.3" cy="9.3" r="7.3" fill="none" stroke="#9E9E9E" stroke-width="1.7"/><line x1="14.6" y1="14.6" x2="17.6" y2="17.6" stroke="#8A8A8A" stroke-width="2.6" stroke-linecap="round"/></svg>
<div class="t" style="left:920.5px;top:520.23px;font-size:16.5px;font-weight:400;color:#222;letter-spacing:0.02px;">Профиль групп доступа: Только просмотр</div>
<div class="t" style="left:920.5px;top:539.03px;font-size:16.5px;font-weight:400;color:#A2A2A2;letter-spacing:0.02px;">Роль: Использование обработки помощник <span style="color:#00963C">корректировк</span>и остатков</div>
<div class="t" style="left:920.5px;top:557.73px;font-size:16.5px;font-weight:400;color:#A2A2A2;letter-spacing:0.02px;">ЕГАИС (Роль)</div>
<div class="t" style="left:920.5px;top:576.53px;font-size:16.5px;font-weight:400;color:#A2A2A2;letter-spacing:0.1px;">Роль: Просмотр отчета Движения между <span style="color:#00963C">регистр</span>ами ЕГАИС (Роль)</div>
<div style="left:873px;top:614px;width:619px;height:1px;background:#A8A8A8"></div>
<div class="t" style="left:881px;top:629.63px;font-size:16.5px;font-weight:400;color:#2159B5;letter-spacing:0.02px;text-decoration:underline;text-underline-offset:2px">Что искать</div>
</body></html>
